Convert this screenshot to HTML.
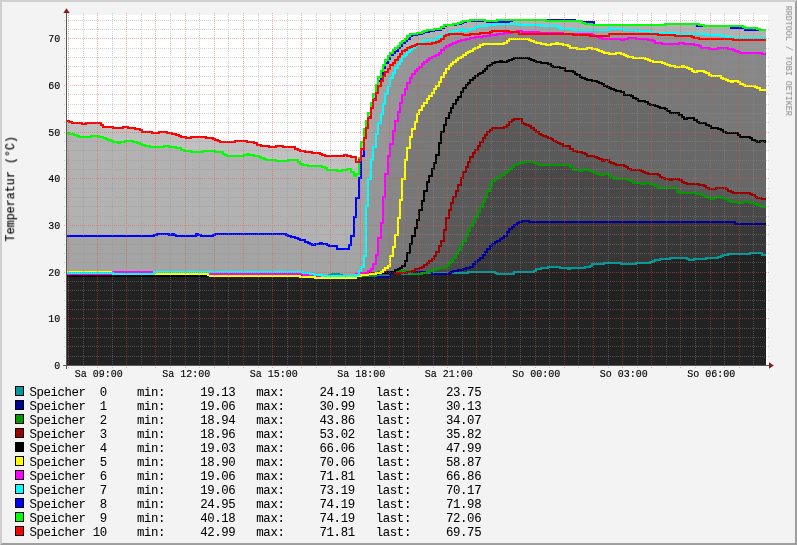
<!DOCTYPE html>
<html><head><meta charset="utf-8"><style>
html,body{margin:0;padding:0;background:#F3F3F3;}
svg{display:block;}
text{font-family:"Liberation Mono",monospace;}
</style></head><body>
<svg width="797" height="545" viewBox="0 0 797 545">
<rect x="0" y="0" width="797" height="545" fill="#F3F3F3"/>
<polygon points="0,0 797,0 795,2 2,2 2,543 0,545" fill="#CFCFCF"/>
<polygon points="797,0 797,545 0,545 2,543 795,543 795,2" fill="#9E9E9E"/>
<rect x="67" y="15" width="701" height="351" fill="#FFFFFF"/>

<g shape-rendering="crispEdges">
<path d="M67 365V121H69V122H72V123H82V124H86V123H101V125H103V127H113V128H123V127H128V128H135V129H140V130H142V132H152V133H159V132H167V133H172V134H176V135H179V136H181V137H186V138H191V137H206V138H213V139H215V140H218V141H220V142H235V141H247V142H254V143H257V145H261V146H269V147H276V146H283V147H295V149H298V150H300V151H305V152H312V153H320V154H322V155H325V156H344V155H347V156H351V157H356V162H359V158H361V142H364V129H366V121H368V113H371V103H373V94H376V85H378V77H381V71H383V65H385V60H388V56H390V53H393V50H395V48H398V46H400V43H402V41H405V39H407V36H410V34H417V33H422V32H424V31H427V30H434V29H441V27H444V25H453V24H458V23H461V22H463V21H470V20H485V21H497V20H575V21H582V22H594V25H665V24H699V25H704V26H743V27H745V28H757V29H760V30H766V365Z" fill="rgb(192,192,192)"/>
<path d="M67 365V133H69V134H74V135H77V136H79V137H91V136H99V137H103V138H106V139H108V140H111V141H113V142H118V143H120V142H125V141H133V142H137V143H140V144H142V145H145V146H150V147H164V146H169V147H176V148H181V150H184V151H191V152H203V151H215V152H223V154H225V155H227V156H244V155H247V154H249V155H254V156H259V157H261V158H264V159H266V160H276V161H288V160H298V162H300V164H303V165H308V166H322V167H325V168H327V170H337V171H342V170H347V169H351V172H354V176H356V174H359V160H361V149H364V136H366V126H368V117H371V108H373V99H376V90H378V81H381V74H383V68H385V63H388V59H390V55H393V53H395V51H398V48H400V46H402V43H405V41H407V39H410V36H412V35H417V34H422V33H424V32H429V31H434V30H441V28H444V26H446V25H456V24H461V23H463V22H466V21H487V22H509V21H512V20H546V21H582V23H585V24H592V25H665V24H697V26H731V28H745V30H766V365Z" fill="rgb(178,178,178)"/>
<path d="M67 365V236H154V235H157V234H169V235H172V234H174V235H176V236H196V234H198V235H201V236H213V235H215V234H286V235H288V236H291V237H295V238H298V239H300V240H305V242H308V243H310V244H312V245H315V244H320V243H322V244H327V245H329V246H337V249H349V245H351V236H354V217H356V198H359V178H361V156H364V138H366V128H368V118H371V108H373V100H376V93H378V86H381V81H383V76H385V72H388V69H390V65H393V63H395V60H398V57H400V54H402V51H405V50H407V48H410V47H412V46H415V45H417V44H419V43H422V42H424V40H436V38H439V37H441V36H444V35H446V34H449V32H453V31H458V30H461V29H463V31H466V30H470V29H475V27H478V26H487V25H495V24H519V25H541V26H558V27H560V29H573V30H609V28H611V29H624V30H636V31H650V32H653V33H675V34H706V35H721V36H726V37H731V38H766V365Z" fill="rgb(164,164,164)"/>
<path d="M67 365V272H303V273H310V274H315V275H322V276H329V275H332V274H339V275H342V276H356V274H359V271H361V267H364V256H366V206H368V179H371V160H373V147H376V134H378V123H381V114H383V104H385V94H388V86H390V78H393V73H395V68H398V64H400V61H402V57H405V55H407V52H410V50H412V48H415V46H417V45H419V44H432V43H436V42H439V41H441V39H444V36H446V35H449V34H463V35H470V34H480V33H490V32H492V31H509V32H517V31H522V32H539V33H563V34H592V35H594V36H609V34H658V35H675V36H692V37H694V38H699V39H733V40H766V365Z" fill="rgb(150,150,150)"/>
<path d="M67 365V273H154V272H210V274H303V275H317V276H356V275H359V273H368V271H371V269H373V264H376V255H378V238H381V223H383V197H385V174H388V156H390V144H393V131H395V121H398V112H400V103H402V95H405V89H407V83H410V78H412V74H415V71H417V69H419V67H422V64H424V62H427V60H429V58H432V57H434V56H436V55H439V53H441V50H444V48H446V46H449V45H451V44H453V43H456V42H458V41H461V40H466V39H470V38H475V37H483V36H490V35H497V34H504V33H512V32H519V34H573V35H590V36H597V37H599V38H602V39H621V40H624V39H628V38H636V39H648V40H653V41H655V43H662V44H679V43H684V44H694V45H699V46H701V48H709V49H718V48H728V49H733V50H735V51H738V52H740V53H762V54H766V365Z" fill="rgb(135,135,135)"/>
<path d="M67 365V274H300V276H359V275H361V273H378V272H383V270H385V268H388V266H390V256H393V247H395V235H398V218H400V200H402V179H405V160H407V148H410V137H412V129H415V122H417V114H419V110H422V106H424V103H427V99H429V96H432V93H434V89H436V86H439V82H441V77H444V73H446V69H449V66H451V64H453V62H456V60H458V58H461V57H463V55H466V53H468V52H470V51H473V49H475V48H478V47H480V45H483V44H504V43H507V41H509V39H529V40H531V41H534V42H536V43H541V44H546V45H551V44H556V43H558V44H563V45H568V46H570V48H577V49H587V48H592V49H597V50H599V51H602V52H604V53H609V54H616V53H621V54H624V55H626V56H628V57H633V58H645V59H648V60H650V61H653V62H662V63H665V64H667V65H670V66H675V67H682V66H684V67H687V68H689V69H692V71H694V72H697V71H704V72H706V73H709V75H711V76H721V78H723V79H726V80H728V81H731V82H733V81H738V82H740V84H743V85H745V86H755V87H757V88H760V90H766V365Z" fill="rgb(120,120,120)"/>
<path d="M67 365V274H300V276H359V275H368V274H376V273H381V272H395V270H398V269H400V268H402V266H405V261H407V253H410V244H412V236H415V228H417V220H419V210H422V201H424V191H427V182H429V176H432V169H434V163H436V155H439V143H441V132H444V125H446V118H449V113H451V108H453V104H456V100H458V97H461V92H463V88H466V85H468V83H470V80H473V78H475V76H478V74H480V73H483V71H485V69H487V66H490V65H492V63H495V62H500V61H502V62H507V61H509V60H512V59H514V58H529V59H531V60H534V61H536V62H541V63H548V64H551V66H553V67H560V68H565V71H573V72H575V74H577V75H580V77H582V78H585V79H587V80H592V81H597V82H599V83H602V84H604V86H607V87H609V88H611V89H614V90H616V91H621V92H624V95H631V96H633V98H636V99H638V101H645V102H648V104H650V105H655V106H658V107H660V108H665V109H667V111H670V113H679V115H682V117H684V119H687V118H694V120H697V122H699V123H706V125H709V126H711V128H718V129H721V130H723V132H726V133H738V135H740V137H750V138H752V140H755V141H757V142H760V141H765V142H766V365Z" fill="rgb(104,104,104)"/>
<path d="M67 365V274H300V276H361V275H368V274H376V273H383V272H398V271H415V269H419V268H422V267H424V265H427V263H429V261H432V259H434V256H436V252H439V246H441V241H444V230H446V218H449V210H451V203H453V197H456V191H458V185H461V178H463V172H466V167H468V162H470V157H473V153H475V150H478V146H480V142H483V138H485V135H487V132H490V130H492V128H504V127H507V125H509V122H512V120H514V119H522V123H524V124H526V125H529V126H531V128H534V130H536V132H539V134H541V135H543V136H546V137H548V138H551V139H553V141H556V142H558V143H560V144H563V146H570V149H573V151H577V152H582V153H585V154H587V156H594V157H597V158H599V159H602V161H604V160H609V162H611V163H614V164H616V165H624V166H626V167H628V169H631V170H641V171H643V172H645V173H648V174H658V175H660V177H662V178H665V179H670V180H672V179H679V180H682V182H684V183H687V184H699V185H704V186H706V188H709V189H716V188H726V189H728V191H731V192H733V193H750V194H752V195H755V197H757V198H762V199H766V365Z" fill="rgb(89,89,89)"/>
<path d="M67 365V274H240V276H276V274H300V276H376V274H378V273H388V272H395V273H402V272H429V271H432V270H436V269H439V268H446V266H449V263H451V261H453V258H456V254H458V250H461V245H463V241H466V236H468V231H470V226H473V222H475V217H478V212H480V207H483V202H485V197H487V191H490V186H492V181H495V179H497V178H500V176H502V175H504V173H507V171H509V169H512V167H514V165H517V164H519V163H524V162H534V163H536V164H539V165H570V167H573V170H580V171H582V170H585V169H587V170H590V171H592V172H594V173H597V174H599V175H604V174H609V176H611V177H614V179H628V180H631V181H633V183H641V184H645V183H650V184H653V185H655V186H658V188H677V192H679V193H697V194H701V195H704V196H706V197H709V198H711V199H714V198H716V197H721V198H726V199H728V201H731V202H738V203H743V202H750V203H755V204H757V205H760V206H762V207H766V365Z" fill="rgb(72,72,72)"/>
<path d="M67 365V274H208V275H210V276H390V273H407V272H432V273H451V272H453V271H458V270H463V269H466V268H470V267H473V264H475V262H478V260H480V258H483V255H485V252H487V249H490V246H492V244H495V242H497V241H500V239H502V238H504V236H507V232H509V229H512V227H514V225H517V223H519V222H522V221H529V222H735V224H766V365Z" fill="rgb(55,55,55)"/>
<path d="M67 365V276H300V277H315V278H356V276H366V277H390V273H398V274H400V273H402V274H410V272H412V274H422V273H427V272H429V273H432V274H449V273H468V272H495V273H497V274H514V272H534V271H536V269H541V268H548V267H560V268H568V269H570V268H585V267H590V266H592V264H604V263H621V264H636V263H650V262H653V261H655V260H660V259H670V258H687V259H689V260H694V259H706V258H718V257H721V256H723V255H728V254H750V253H762V255H766V365Z" fill="rgb(34,34,34)"/>
</g>
<g fill="none" stroke-width="2" shape-rendering="crispEdges">
<path d="M67 274H300V276H329V275H332V274H339V275H342V276H390V273H402V274H410V272H429V273H468V272H495V273H497V274H514V272H534V271H536V269H541V268H548V267H560V268H568V269H570V268H585V267H590V266H592V264H604V263H621V264H636V263H650V262H653V261H655V260H660V259H670V258H687V259H689V260H694V259H706V258H718V257H721V256H723V255H728V254H750V253H762V255H766" stroke="#009999"/>
<path d="M67 274H300V276H366V277H390V273H402V272H432V274H449V273H451V272H453V271H458V270H463V269H466V268H470V267H473V264H475V262H478V260H480V258H483V255H485V252H487V249H490V246H492V244H495V242H497V241H500V239H502V238H504V236H507V232H509V229H512V227H514V225H517V223H519V222H522V221H529V222H735V224H766" stroke="#000099"/>
<path d="M67 274H240V276H276V274H300V276H376V273H378V272H398V271H412V274H422V273H427V272H429V271H432V270H436V269H439V268H446V266H449V263H451V261H453V258H456V254H458V250H461V245H463V241H466V236H468V231H470V226H473V222H475V217H478V212H480V207H483V202H485V197H487V191H490V186H492V181H495V179H497V178H500V176H502V175H504V173H507V171H509V169H512V167H514V165H517V164H519V163H524V162H534V163H536V164H539V165H570V167H573V170H580V171H582V170H585V169H587V170H590V171H592V172H594V173H597V174H599V175H604V174H609V176H611V177H614V179H628V180H631V181H633V183H641V184H645V183H650V184H653V185H655V186H658V188H677V192H679V193H697V194H701V195H704V196H706V197H709V198H711V199H714V198H716V197H721V198H726V199H728V201H731V202H738V203H743V202H750V203H755V204H757V205H760V206H762V207H766" stroke="#009900"/>
<path d="M67 274H300V276H359V275H361V273H383V272H395V273H398V274H400V273H407V272H412V271H415V269H419V268H422V267H424V265H427V263H429V261H432V259H434V256H436V252H439V246H441V241H444V230H446V218H449V210H451V203H453V197H456V191H458V185H461V178H463V172H466V167H468V162H470V157H473V153H475V150H478V146H480V142H483V138H485V135H487V132H490V130H492V128H504V127H507V125H509V122H512V120H514V119H522V123H524V124H526V125H529V126H531V128H534V130H536V132H539V134H541V135H543V136H546V137H548V138H551V139H553V141H556V142H558V143H560V144H563V146H570V149H573V151H577V152H582V153H585V154H587V156H594V157H597V158H599V159H602V161H604V160H609V162H611V163H614V164H616V165H624V166H626V167H628V169H631V170H641V171H643V172H645V173H648V174H658V175H660V177H662V178H665V179H670V180H672V179H679V180H682V182H684V183H687V184H699V185H704V186H706V188H709V189H716V188H726V189H728V191H731V192H733V193H750V194H752V195H755V197H757V198H762V199H766" stroke="#990000"/>
<path d="M67 276H359V275H368V274H378V273H388V272H395V270H398V269H400V268H402V266H405V261H407V253H410V244H412V236H415V228H417V220H419V210H422V201H424V191H427V182H429V176H432V169H434V163H436V155H439V143H441V132H444V125H446V118H449V113H451V108H453V104H456V100H458V97H461V92H463V88H466V85H468V83H470V80H473V78H475V76H478V74H480V73H483V71H485V69H487V66H490V65H492V63H495V62H500V61H502V62H507V61H509V60H512V59H514V58H529V59H531V60H534V61H536V62H541V63H548V64H551V66H553V67H560V68H565V71H573V72H575V74H577V75H580V77H582V78H585V79H587V80H592V81H597V82H599V83H602V84H604V86H607V87H609V88H611V89H614V90H616V91H621V92H624V95H631V96H633V98H636V99H638V101H645V102H648V104H650V105H655V106H658V107H660V108H665V109H667V111H670V113H679V115H682V117H684V119H687V118H694V120H697V122H699V123H706V125H709V126H711V128H718V129H721V130H723V132H726V133H738V135H740V137H750V138H752V140H755V141H757V142H760V141H765V142H766" stroke="#000000"/>
<path d="M67 272H113V273H154V274H208V275H210V276H300V277H315V278H356V276H361V275H368V274H376V273H381V272H383V270H385V268H388V266H390V256H393V247H395V235H398V218H400V200H402V179H405V160H407V148H410V137H412V129H415V122H417V114H419V110H422V106H424V103H427V99H429V96H432V93H434V89H436V86H439V82H441V77H444V73H446V69H449V66H451V64H453V62H456V60H458V58H461V57H463V55H466V53H468V52H470V51H473V49H475V48H478V47H480V45H483V44H504V43H507V41H509V39H529V40H531V41H534V42H536V43H541V44H546V45H551V44H556V43H558V44H563V45H568V46H570V48H577V49H587V48H592V49H597V50H599V51H602V52H604V53H609V54H616V53H621V54H624V55H626V56H628V57H633V58H645V59H648V60H650V61H653V62H662V63H665V64H667V65H670V66H675V67H682V66H684V67H687V68H689V69H692V71H694V72H697V71H704V72H706V73H709V75H711V76H721V78H723V79H726V80H728V81H731V82H733V81H738V82H740V84H743V85H745V86H755V87H757V88H760V90H766" stroke="#FFFF00"/>
<path d="M67 274H113V272H210V274H303V275H317V276H356V274H359V273H368V271H371V269H373V264H376V255H378V238H381V223H383V197H385V174H388V156H390V144H393V131H395V121H398V112H400V103H402V95H405V89H407V83H410V78H412V74H415V71H417V69H419V67H422V64H424V62H427V60H429V58H432V57H434V56H436V55H439V53H441V50H444V48H446V46H449V45H451V44H453V43H456V42H458V41H461V40H466V39H470V38H475V37H483V36H490V35H497V34H504V33H512V32H517V31H522V32H539V33H563V34H592V35H594V36H597V37H599V38H602V39H621V40H624V39H628V38H636V39H648V40H653V41H655V43H662V44H679V43H684V44H694V45H699V46H701V48H709V49H718V48H728V49H733V50H735V51H738V52H740V53H762V54H766" stroke="#FF00FF"/>
<path d="M67 273H113V274H154V272H303V273H310V274H315V275H322V276H356V275H359V271H361V267H364V256H366V206H368V179H371V160H373V147H376V134H378V123H381V114H383V104H385V94H388V86H390V78H393V73H395V68H398V64H400V61H402V57H405V55H407V52H410V50H412V48H415V46H417V45H419V43H422V42H424V40H436V38H439V37H441V36H444V35H446V34H449V32H453V31H458V30H461V29H463V31H466V30H470V29H475V27H478V26H487V25H495V24H519V25H541V26H558V27H560V29H573V30H609V28H611V29H624V30H636V31H650V32H653V33H675V34H706V35H721V36H726V37H731V38H766" stroke="#00FFFF"/>
<path d="M67 236H154V235H157V234H169V235H172V234H174V235H176V236H196V234H198V235H201V236H213V235H215V234H286V235H288V236H291V237H295V238H298V239H300V240H305V242H308V243H310V244H312V245H315V244H320V243H322V244H327V245H329V246H337V249H349V245H351V236H354V217H356V198H359V178H361V156H364V136H366V126H368V117H371V108H373V99H376V90H378V81H381V74H383V68H385V63H388V59H390V55H393V53H395V51H398V48H400V46H402V43H405V41H407V39H410V36H412V35H417V34H422V33H424V32H429V31H434V30H441V28H444V26H446V25H456V24H461V23H463V22H466V21H487V22H509V21H512V20H575V21H582V22H594V25H665V24H697V26H731V28H745V30H766" stroke="#0000FF"/>
<path d="M67 133H69V134H74V135H77V136H79V137H91V136H99V137H103V138H106V139H108V140H111V141H113V142H118V143H120V142H125V141H133V142H137V143H140V144H142V145H145V146H150V147H164V146H169V147H176V148H181V150H184V151H191V152H203V151H215V152H223V154H225V155H227V156H244V155H247V154H249V155H254V156H259V157H261V158H264V159H266V160H276V161H288V160H298V162H300V164H303V165H308V166H322V167H325V168H327V170H337V171H342V170H347V169H351V172H354V176H356V174H359V158H361V142H364V129H366V121H368V113H371V103H373V94H376V85H378V77H381V71H383V65H385V60H388V56H390V53H393V50H395V48H398V46H400V43H402V41H405V39H407V36H410V34H417V33H422V32H424V31H427V30H434V29H441V27H444V25H453V24H458V23H461V22H463V21H470V20H485V21H497V20H546V21H582V23H585V24H592V25H665V24H699V25H704V26H743V27H745V28H757V29H760V30H766" stroke="#00FF00"/>
<path d="M67 121H69V122H72V123H82V124H86V123H101V125H103V127H113V128H123V127H128V128H135V129H140V130H142V132H152V133H159V132H167V133H172V134H176V135H179V136H181V137H186V138H191V137H206V138H213V139H215V140H218V141H220V142H235V141H247V142H254V143H257V145H261V146H269V147H276V146H283V147H295V149H298V150H300V151H305V152H312V153H320V154H322V155H325V156H344V155H347V156H351V157H356V162H359V160H361V149H364V138H366V128H368V118H371V108H373V100H376V93H378V86H381V81H383V76H385V72H388V69H390V65H393V63H395V60H398V57H400V54H402V51H405V50H407V48H410V47H412V46H415V45H417V44H432V43H436V42H439V41H441V39H444V36H446V35H449V34H463V35H470V34H480V33H490V32H492V31H509V32H519V34H573V35H590V36H609V34H658V35H675V36H692V37H694V38H699V39H733V40H766" stroke="#FF0000"/>
</g>
<path d="M64 356.5H769M64 346.5H769M64 337.5H769M64 328.5H769M64 309.5H769M64 300.5H769M64 290.5H769M64 281.5H769M64 262.5H769M64 253.5H769M64 244.5H769M64 234.5H769M64 216.5H769M64 206.5H769M64 197.5H769M64 188.5H769M64 169.5H769M64 160.5H769M64 150.5H769M64 141.5H769M64 122.5H769M64 113.5H769M64 104.5H769M64 94.5H769M64 76.5H769M64 66.5H769M64 57.5H769M64 48.5H769M64 29.5H769M64 20.5H769M83.5 13V368M112.5 13V368M141.5 13V368M170.5 13V368M199.5 13V368M228.5 13V368M258.5 13V368M287.5 13V368M316.5 13V368M345.5 13V368M374.5 13V368M403.5 13V368M433.5 13V368M462.5 13V368M491.5 13V368M520.5 13V368M549.5 13V368M578.5 13V368M608.5 13V368M637.5 13V368M666.5 13V368M695.5 13V368M724.5 13V368M753.5 13V368" stroke="rgba(144,144,144,0.4)" stroke-width="1" stroke-dasharray="1 1" shape-rendering="crispEdges" fill="none"/>
<path d="M64 318.5H769M64 272.5H769M64 225.5H769M64 178.5H769M64 132.5H769M64 85.5H769M64 38.5H769M68.5 13V368M97.5 13V368M126.5 13V368M155.5 13V368M185.5 13V368M214.5 13V368M243.5 13V368M272.5 13V368M301.5 13V368M330.5 13V368M360.5 13V368M389.5 13V368M418.5 13V368M447.5 13V368M476.5 13V368M505.5 13V368M535.5 13V368M564.5 13V368M593.5 13V368M622.5 13V368M651.5 13V368M680.5 13V368M710.5 13V368M739.5 13V368" stroke="rgba(224,80,80,0.45)" stroke-width="1" stroke-dasharray="1 1" shape-rendering="crispEdges" fill="none"/>
<g shape-rendering="crispEdges"><rect x="63" y="365" width="707" height="1" fill="#5A5A5A"/><rect x="66" y="12" width="1" height="357" fill="#5A5A5A"/></g>
<polygon points="63.3,13 66.5,8.3 69.7,13" fill="#801F1F"/>
<polygon points="769,362.3 773.8,365.5 769,368.7" fill="#801F1F"/>
<g style="will-change:transform" stroke="#000" stroke-width="0.15">
<text transform="translate(60.3,368.9) scale(0.87,1)" font-size="11.5" text-anchor="end">0</text>
<text transform="translate(60.3,322.2) scale(0.87,1)" font-size="11.5" text-anchor="end">10</text>
<text transform="translate(60.3,275.6) scale(0.87,1)" font-size="11.5" text-anchor="end">20</text>
<text transform="translate(60.3,228.9) scale(0.87,1)" font-size="11.5" text-anchor="end">30</text>
<text transform="translate(60.3,182.2) scale(0.87,1)" font-size="11.5" text-anchor="end">40</text>
<text transform="translate(60.3,135.6) scale(0.87,1)" font-size="11.5" text-anchor="end">50</text>
<text transform="translate(60.3,88.9) scale(0.87,1)" font-size="11.5" text-anchor="end">60</text>
<text transform="translate(60.3,42.2) scale(0.87,1)" font-size="11.5" text-anchor="end">70</text>
<text transform="translate(98.7,377.2) scale(0.87,1)" font-size="11.5" text-anchor="middle" xml:space="preserve">Sa 09:00</text>
<text transform="translate(186.2,377.2) scale(0.87,1)" font-size="11.5" text-anchor="middle" xml:space="preserve">Sa 12:00</text>
<text transform="translate(273.7,377.2) scale(0.87,1)" font-size="11.5" text-anchor="middle" xml:space="preserve">Sa 15:00</text>
<text transform="translate(361.2,377.2) scale(0.87,1)" font-size="11.5" text-anchor="middle" xml:space="preserve">Sa 18:00</text>
<text transform="translate(448.7,377.2) scale(0.87,1)" font-size="11.5" text-anchor="middle" xml:space="preserve">Sa 21:00</text>
<text transform="translate(536.2,377.2) scale(0.87,1)" font-size="11.5" text-anchor="middle" xml:space="preserve">So 00:00</text>
<text transform="translate(623.7,377.2) scale(0.87,1)" font-size="11.5" text-anchor="middle" xml:space="preserve">So 03:00</text>
<text transform="translate(711.2,377.2) scale(0.87,1)" font-size="11.5" text-anchor="middle" xml:space="preserve">So 06:00</text>
<text transform="translate(14.2,241.5) rotate(-90) scale(0.86,1)" font-size="13.63" xml:space="preserve">Temperatur (°C)</text>
<text transform="translate(29.4,395.5) scale(0.95,1)" font-size="13.05" letter-spacing="-0.43" stroke-width="0.05" xml:space="preserve">Speicher  0</text>
<text transform="translate(136.9,395.5) scale(0.95,1)" font-size="13.05" letter-spacing="-0.43" stroke-width="0.05" xml:space="preserve">min:     19.13   max:     24.19   last:     23.75</text>
<text transform="translate(29.4,409.5) scale(0.95,1)" font-size="13.05" letter-spacing="-0.43" stroke-width="0.05" xml:space="preserve">Speicher  1</text>
<text transform="translate(136.9,409.5) scale(0.95,1)" font-size="13.05" letter-spacing="-0.43" stroke-width="0.05" xml:space="preserve">min:     19.06   max:     30.99   last:     30.13</text>
<text transform="translate(29.4,423.5) scale(0.95,1)" font-size="13.05" letter-spacing="-0.43" stroke-width="0.05" xml:space="preserve">Speicher  2</text>
<text transform="translate(136.9,423.5) scale(0.95,1)" font-size="13.05" letter-spacing="-0.43" stroke-width="0.05" xml:space="preserve">min:     18.94   max:     43.86   last:     34.07</text>
<text transform="translate(29.4,437.5) scale(0.95,1)" font-size="13.05" letter-spacing="-0.43" stroke-width="0.05" xml:space="preserve">Speicher  3</text>
<text transform="translate(136.9,437.5) scale(0.95,1)" font-size="13.05" letter-spacing="-0.43" stroke-width="0.05" xml:space="preserve">min:     18.96   max:     53.02   last:     35.82</text>
<text transform="translate(29.4,451.5) scale(0.95,1)" font-size="13.05" letter-spacing="-0.43" stroke-width="0.05" xml:space="preserve">Speicher  4</text>
<text transform="translate(136.9,451.5) scale(0.95,1)" font-size="13.05" letter-spacing="-0.43" stroke-width="0.05" xml:space="preserve">min:     19.03   max:     66.06   last:     47.99</text>
<text transform="translate(29.4,465.5) scale(0.95,1)" font-size="13.05" letter-spacing="-0.43" stroke-width="0.05" xml:space="preserve">Speicher  5</text>
<text transform="translate(136.9,465.5) scale(0.95,1)" font-size="13.05" letter-spacing="-0.43" stroke-width="0.05" xml:space="preserve">min:     18.90   max:     70.06   last:     58.87</text>
<text transform="translate(29.4,479.5) scale(0.95,1)" font-size="13.05" letter-spacing="-0.43" stroke-width="0.05" xml:space="preserve">Speicher  6</text>
<text transform="translate(136.9,479.5) scale(0.95,1)" font-size="13.05" letter-spacing="-0.43" stroke-width="0.05" xml:space="preserve">min:     19.06   max:     71.81   last:     66.86</text>
<text transform="translate(29.4,493.5) scale(0.95,1)" font-size="13.05" letter-spacing="-0.43" stroke-width="0.05" xml:space="preserve">Speicher  7</text>
<text transform="translate(136.9,493.5) scale(0.95,1)" font-size="13.05" letter-spacing="-0.43" stroke-width="0.05" xml:space="preserve">min:     19.06   max:     73.19   last:     70.17</text>
<text transform="translate(29.4,507.5) scale(0.95,1)" font-size="13.05" letter-spacing="-0.43" stroke-width="0.05" xml:space="preserve">Speicher  8</text>
<text transform="translate(136.9,507.5) scale(0.95,1)" font-size="13.05" letter-spacing="-0.43" stroke-width="0.05" xml:space="preserve">min:     24.95   max:     74.19   last:     71.98</text>
<text transform="translate(29.4,521.5) scale(0.95,1)" font-size="13.05" letter-spacing="-0.43" stroke-width="0.05" xml:space="preserve">Speicher  9</text>
<text transform="translate(136.9,521.5) scale(0.95,1)" font-size="13.05" letter-spacing="-0.43" stroke-width="0.05" xml:space="preserve">min:     40.18   max:     74.19   last:     72.06</text>
<text transform="translate(29.4,535.5) scale(0.95,1)" font-size="13.05" letter-spacing="-0.43" stroke-width="0.05" xml:space="preserve">Speicher 10</text>
<text transform="translate(136.9,535.5) scale(0.95,1)" font-size="13.05" letter-spacing="-0.43" stroke-width="0.05" xml:space="preserve">min:     42.99   max:     71.81   last:     69.75</text>
</g>
<g style="will-change:transform"><text transform="translate(786,6) rotate(90) scale(0.86,1)" font-size="9.7" fill="#959595" stroke="#959595" stroke-width="0.12" xml:space="preserve">RRDTOOL / TOBI OETIKER</text></g>
<rect x="15.5" y="386.5" width="8" height="9" fill="#009999" stroke="#000" stroke-width="1" shape-rendering="crispEdges"/>
<rect x="15.5" y="400.5" width="8" height="9" fill="#000099" stroke="#000" stroke-width="1" shape-rendering="crispEdges"/>
<rect x="15.5" y="414.5" width="8" height="9" fill="#009900" stroke="#000" stroke-width="1" shape-rendering="crispEdges"/>
<rect x="15.5" y="428.5" width="8" height="9" fill="#990000" stroke="#000" stroke-width="1" shape-rendering="crispEdges"/>
<rect x="15.5" y="442.5" width="8" height="9" fill="#000000" stroke="#000" stroke-width="1" shape-rendering="crispEdges"/>
<rect x="15.5" y="456.5" width="8" height="9" fill="#FFFF00" stroke="#000" stroke-width="1" shape-rendering="crispEdges"/>
<rect x="15.5" y="470.5" width="8" height="9" fill="#FF00FF" stroke="#000" stroke-width="1" shape-rendering="crispEdges"/>
<rect x="15.5" y="484.5" width="8" height="9" fill="#00FFFF" stroke="#000" stroke-width="1" shape-rendering="crispEdges"/>
<rect x="15.5" y="498.5" width="8" height="9" fill="#0000FF" stroke="#000" stroke-width="1" shape-rendering="crispEdges"/>
<rect x="15.5" y="512.5" width="8" height="9" fill="#00FF00" stroke="#000" stroke-width="1" shape-rendering="crispEdges"/>
<rect x="15.5" y="526.5" width="8" height="9" fill="#FF0000" stroke="#000" stroke-width="1" shape-rendering="crispEdges"/>
</svg></body></html>
